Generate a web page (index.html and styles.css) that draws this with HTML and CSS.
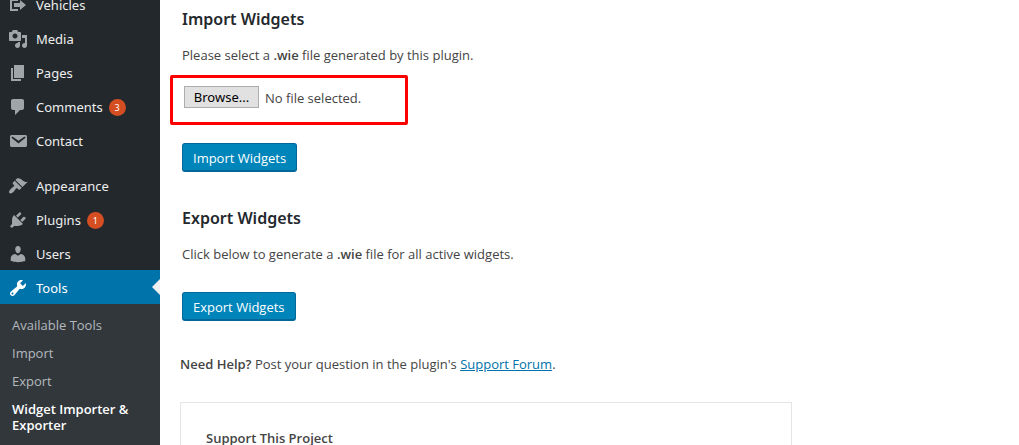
FILE: index.html
```html
<!DOCTYPE html>
<html lang="en">
<head>
<meta charset="utf-8">
<title>Widget Importer &amp; Exporter</title>
<link rel="stylesheet" href="styles.css">
</head>
<body>
<div class="layout">
  <nav class="sidebar" aria-label="Main menu">
    <ul class="menu">
      <li><a class="menu-link" href="#"><svg class="icon" viewBox="0 0 20 20"><path d="M4 6h6V4H2v12.01h8V14H4V6zm2 2h6V5l6 5-6 5v-3H6V8z"/></svg>Vehicles</a></li>
      <li><a class="menu-link" href="#"><svg class="icon" viewBox="0 0 20 20"><path d="M13 11V4c0-.55-.45-1-1-1h-1.67L9 1H5L3.67 3H2c-.55 0-1 .45-1 1v7c0 .55.45 1 1 1h10c.55 0 1-.45 1-1zM7 4.5c1.38 0 2.5 1.12 2.5 2.5S8.38 9.5 7 9.5 4.5 8.38 4.5 7 5.62 4.5 7 4.5zM14 6h5v10.5c0 1.38-1.12 2.5-2.5 2.5S14 17.88 14 16.5s1.12-2.5 2.5-2.5c.17 0 .34.02.5.05V9h-3V6zm-4 8.05V13h2v3.5c0 1.38-1.12 2.5-2.5 2.5S7 17.88 7 16.5 8.12 14 9.5 14c.17 0 .34.02.5.05z"/></svg>Media</a></li>
      <li><a class="menu-link" href="#"><svg class="icon" viewBox="0 0 20 20"><path d="M6 15V2h10v13H6zm-1 1h8v2H3V5h2v11z"/></svg>Pages</a></li>
      <li><a class="menu-link" href="#"><svg class="icon" viewBox="0 0 20 20"><path d="M5 2h9c1.1 0 2 .9 2 2v7c0 1.1-.9 2-2 2h-2l-5 5v-5H5c-1.1 0-2-.9-2-2V4c0-1.1.9-2 2-2z"/></svg>Comments<span class="count">3</span></a></li>
      <li><a class="menu-link" href="#"><svg class="icon" viewBox="0 0 20 20"><path d="M3.87 4h13.25C18.37 4 19 4.59 19 5.79v8.42c0 1.19-.63 1.79-1.88 1.79H3.87c-1.25 0-1.88-.6-1.88-1.79V5.79c0-1.2.63-1.79 1.88-1.79zm6.62 8.6l6.74-5.53c.24-.2.43-.66.13-1.07-.29-.41-.82-.42-1.17-.17l-5.7 3.86L4.8 5.83c-.35-.25-.88-.24-1.17.17-.3.41-.11.87.13 1.07z"/></svg>Contact</a></li>
      <li class="group-start"><a class="menu-link" href="#"><svg class="icon" viewBox="0 0 20 20"><path d="M14.48 11.06L7.41 3.99l1.5-1.5c.5-.56 2.3-.47 3.51.32 1.21.8 1.43 1.28 2.91 2.1 1.18.64 2.45 1.26 4.45.85zm-.71.71L6.7 4.7 4.93 6.47c-.39.39-.39 1.02 0 1.41l1.06 1.06c.39.39.39 1.03 0 1.42-.6.6-1.43 1.11-2.21 1.69-.35.26-.7.53-1.01.84C1.43 14.23.4 16.08 1.4 17.07c.99 1 2.84-.03 4.18-1.36.31-.31.58-.66.85-1.02.57-.78 1.08-1.61 1.69-2.21.39-.39 1.02-.39 1.41 0l1.06 1.06c.39.39 1.02.39 1.41 0z"/></svg>Appearance</a></li>
      <li><a class="menu-link" href="#"><svg class="icon" viewBox="0 0 20 20"><path d="M13.11 4.36L9.87 7.6 8 5.73l3.24-3.24c.35-.34 1.05-.2 1.56.32.52.51.66 1.21.31 1.55zm-8 1.77l.91-1.12 9.01 9.01-1.19.84c-.71.71-2.63 1.16-3.82 1.16H6.14L4.9 17.26c-.59.59-1.54.59-2.12 0-.59-.58-.59-1.53 0-2.12l1.24-1.24v-3.88c0-1.13.4-3.19 1.09-3.89zm7.26 3.97l3.24-3.24c.34-.35 1.04-.21 1.55.31.52.51.66 1.21.31 1.55l-3.24 3.25z"/></svg>Plugins<span class="count">1</span></a></li>
      <li><a class="menu-link" href="#"><svg class="icon" viewBox="0 0 20 20"><path d="M10 9.25c-2.27 0-2.73-3.44-2.73-3.44C7 4.02 7.82 2 9.97 2c2.16 0 2.98 2.02 2.71 3.81 0 0-.41 3.44-2.68 3.44zm0 2.57L12.72 10c2.39 0 4.52 2.33 4.52 4.53v2.49s-3.65 1.13-7.24 1.13c-3.65 0-7.24-1.13-7.24-1.13v-2.49c0-2.25 1.94-4.48 4.47-4.48z"/></svg>Users</a></li>
      <li><a class="menu-link current" href="#"><svg class="icon" viewBox="0 0 20 20"><path d="M16.68 9.77c-1.34 1.34-3.3 1.67-4.95.99l-5.41 6.52c-.99.99-2.59.99-3.58 0s-.99-2.59 0-3.57l6.52-5.42c-.68-1.65-.35-3.61.99-4.95 1.28-1.28 3.12-1.62 4.72-1.06l-2.89 2.89 2.82 2.82 2.86-2.87c.53 1.58.18 3.39-1.08 4.65zM3.81 16.21c.4.39 1.04.39 1.43 0 .4-.4.4-1.04 0-1.43-.39-.4-1.03-.4-1.43 0-.39.39-.39 1.03 0 1.43z"/></svg>Tools</a></li>
    </ul>
    <ul class="submenu">
      <li><a href="#">Available Tools</a></li>
      <li><a href="#">Import</a></li>
      <li><a href="#">Export</a></li>
      <li><a class="active" href="#">Widget Importer &amp; Exporter</a></li>
    </ul>
  </nav>

  <main class="content">
    <section class="tool">
      <h2>Import Widgets</h2>
      <p>Please select a <b>.wie</b> file generated by this plugin.</p>
      <div class="picker">
        <input id="wie-file" class="file-input" type="file" accept=".wie" aria-label="Widget file" hidden>
        <button class="browse" type="button" onclick="document.getElementById('wie-file').click()">Browse...</button>
        <label for="wie-file">No file selected.</label>
      </div>
      <button class="primary" type="submit">Import Widgets</button>
    </section>
    <section class="tool export">
      <h2>Export Widgets</h2>
      <p>Click below to generate a <b>.wie</b> file for all active widgets.</p>
      <button class="primary" type="submit">Export Widgets</button>
    </section>
    <p class="help"><b>Need Help?</b> Post your question in the plugin's <a href="#">Support Forum</a>.</p>
    <section class="support">
      <h3>Support This Project</h3>
    </section>
  </main>
</div>
</body>
</html>
```
FILE: styles.css
```css
* { box-sizing: border-box; }
body {
  margin: 0;
  background: #fff;
  color: #444;
  font: 13px/20px "Open Sans", "Noto Sans", sans-serif;
}
h2, h3, p, ul { margin: 0; padding: 0; }
ul { list-style: none; }
b, h2, h3 { font-weight: 600; }

.layout {
  display: flex;
  height: 100vh;
  overflow: hidden;
}

.sidebar {
  display: flex;
  flex-direction: column;
  flex: 0 0 160px;
  background: #23282d;
}
/* The page is scrolled part of the way past the first item. */
.menu { margin-top: -13px; }
.menu-link {
  display: flex;
  align-items: center;
  height: 34px;
  padding: 2px 0 0 8px;
  color: #eee;
  font-family: "Noto Sans", sans-serif;
  text-decoration: none;
}
.icon {
  width: 20px;
  height: 20px;
  margin-right: 8px;
  fill: #a0a5aa;
}
.group-start { margin-top: 11px; }
.count {
  width: 17px;
  height: 17px;
  margin-left: 6px;
  border-radius: 50%;
  background: #d54e21;
  color: #fff;
  font-size: 9px;
  line-height: 17px;
  text-align: center;
}
.current {
  position: relative;
  background: #0073aa;
  color: #fff;
}
.current .icon { fill: #fff; }
.current::after {
  content: "";
  position: absolute;
  right: 0;
  top: 9px;
  border: 8px solid transparent;
  border-left-width: 0;
  border-right-color: #f1f1f1;
}
.submenu {
  flex: 1;
  padding: 7px 12px;
  background: #32373c;
}
.submenu a {
  display: block;
  padding: 6px 0;
  color: #b4b9be;
  line-height: 16px;
  text-decoration: none;
}
.submenu .active {
  color: #fff;
  font-weight: 600;
}

.content {
  flex: 1;
  padding: 7px 20px 0;
}
.tool { padding-left: 2px; }
h2 {
  color: #23282d;
  font: 600 16px/24px "Noto Sans", sans-serif;
}
.tool p { margin-top: 14px; }
.picker {
  display: flex;
  align-items: flex-start;
  gap: 6px;
  width: 238px;
  height: 50px;
  margin: 10px 0 18px -12px;
  padding: 8px 11px;
  border: 3px solid #f00;
  border-radius: 2px;
}
.browse {
  width: 75px;
  height: 22px;
  padding: 0;
  border: 1px solid #adadad;
  background: #e1e1e1;
  color: #000;
  font: 13px/20px "Noto Sans", sans-serif;
}
.picker label { line-height: 24px; }
.primary {
  display: block;
  height: 29px;
  padding: 1px 10px 0;
  border: 1px solid #006799;
  border-bottom-width: 2px;
  border-radius: 3px;
  background: #0085ba;
  color: #fff;
  font: 13px/26px "Open Sans", "Noto Sans", sans-serif;
}
.export { margin-top: 34px; }
.export .primary { margin-top: 28px; }
.help { margin-top: 33px; }
.help a { color: #0073aa; }
.support {
  max-width: 612px;
  height: 160px;
  margin-top: 28px;
  padding: 25px;
  border: 1px solid #e5e5e5;
}
h3 {
  font-size: 13px;
  line-height: 20px;
}
```
